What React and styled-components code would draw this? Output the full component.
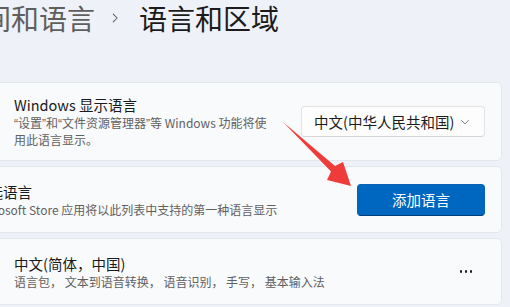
import React from 'react';
import styled, { createGlobalStyle } from 'styled-components';

const GlobalStyle = createGlobalStyle`
    html, body {
        margin: 0;
        padding: 0;
        background: #eef2f8;
        overflow: hidden;
    }
    body {
        font-family: "Noto Sans CJK SC", "Noto Sans", sans-serif;
        color: #1b1b1b;
    }
`;

const Page = styled.div`
    position: relative;
    width: 550px;
    margin-left: -48px;
`;

const Header = styled.div`
    display: flex;
    align-items: center;
    height: 36px;
    padding-left: 3px;
    font-size: 28px;
    line-height: 36px;
    white-space: nowrap;
`;

const Crumb = styled.span`
    color: ${props => (props.current ? '#1b1b1b' : '#5f5f5f')};
`;

const CrumbSep = styled.span`
    box-sizing: border-box;
    display: flex;
    align-items: center;
    justify-content: center;
    width: 44px;
    padding-right: 5px;
    color: #5f5f5f;
`;

const CardList = styled.div`
    display: flex;
    flex-direction: column;
    gap: 5px;
    margin: 46px 0 0 5px;
    width: 545px;
`;

const Card = styled.div`
    box-sizing: border-box;
    display: flex;
    align-items: center;
    height: ${props => props.h}px;
    padding: 0 16px 0 ${props => props.indent}px;
    background: #f9fafc;
    border: 1px solid #e3e6eb;
    border-radius: 5px;
`;

const TextCol = styled.div`
    flex: 1;
    min-width: 0;
`;

const Title = styled.div`
    font-size: 14.5px;
    line-height: 20px;
    color: #1b1b1b;
    white-space: nowrap;
`;

const Desc = styled.div`
    font-size: 12px;
    line-height: 16px;
    color: #616161;
    max-width: ${props => props.wrap || 'none'};
    white-space: ${props => (props.wrap ? 'normal' : 'nowrap')};
`;

// the system font draws the curly quotes narrow, not full width
const Quote = styled.span`
    font-family: "Liberation Sans", sans-serif;
`;

const Select = styled.div`
    box-sizing: border-box;
    display: flex;
    align-items: center;
    justify-content: space-between;
    width: 184px;
    height: 31px;
    padding: 0 13px 0 12px;
    background: #fdfdfd;
    border: 1px solid #e3e3e3;
    border-bottom-color: #d6d6d6;
    border-radius: 4px;
    font-size: 14.5px;
    color: #1b1b1b;
`;

const PrimaryButton = styled.button`
    box-sizing: border-box;
    width: 128px;
    height: 32px;
    border: 1px solid #0a62b0;
    border-bottom-color: #003e73;
    border-radius: 4px;
    background: #0067c0;
    color: #ffffff;
    font-family: inherit;
    font-size: 14.5px;
    cursor: pointer;
`;

const MoreButton = styled.div`
    display: flex;
    align-items: center;
    justify-content: center;
    gap: 2.5px;
    width: 32px;
    height: 32px;
    margin-right: 3px;
`;

const Dot = styled.span`
    width: 2.5px;
    height: 2.5px;
    border-radius: 50%;
    background: #1b1b1b;
`;

const Arrow = styled.svg`
    position: absolute;
    left: 0;
    top: 0;
    pointer-events: none;
`;

function Chevron({ size, rotate, color }) {
    return (
        <svg width={size} height={size} viewBox="0 0 16 16" style={{ transform: `rotate(${rotate}deg)` }}>
            <path d="M6 3.5 L10.5 8 L6 12.5" fill="none" stroke={color} strokeWidth="1.2" strokeLinecap="round" strokeLinejoin="round" />
        </svg>
    );
}

export default function App() {
    return (
        <>
            <GlobalStyle />
            <Page>
                <Header>
                    <Crumb>时间和语言</Crumb>
                    <CrumbSep><Chevron size={14} rotate={0} color="#5f5f5f" /></CrumbSep>
                    <Crumb current>语言和区域</Crumb>
                </Header>
                <CardList>
                    <Card h={79} indent={56}>
                        <TextCol>
                            <Title>Windows 显示语言</Title>
                            <Desc wrap="262px">
                                <Quote>“</Quote>设置<Quote>”</Quote>和<Quote>“</Quote>文件资源管理器<Quote>”</Quote>等 Windows 功能将使用此语言显示。
                            </Desc>
                        </TextCol>
                        <Select>
                            <span>中文(中华人民共和国)</span>
                            <Chevron size={12} rotate={90} color="#6a6a6a" />
                        </Select>
                    </Card>
                    <Card h={67} indent={16}>
                        <TextCol>
                            <Title>首选语言</Title>
                            <Desc>Microsoft Store 应用将以此列表中支持的第一种语言显示</Desc>
                        </TextCol>
                        <PrimaryButton>添加语言</PrimaryButton>
                    </Card>
                    <Card h={67} indent={56}>
                        <TextCol>
                            <Title>中文(简体，中国)</Title>
                            <Desc>语言包， 文本到语音转换， 语音识别， 手写， 基本输入法</Desc>
                        </TextCol>
                        <MoreButton><Dot /><Dot /><Dot /></MoreButton>
                    </Card>
                </CardList>
            </Page>
            <Arrow width="510" height="307" viewBox="0 0 510 307">
                <polygon points="283,122 335,166 343,162 351,186 327,180 331,171.5" fill="#f03b3b" />
            </Arrow>
        </>
    );
}
